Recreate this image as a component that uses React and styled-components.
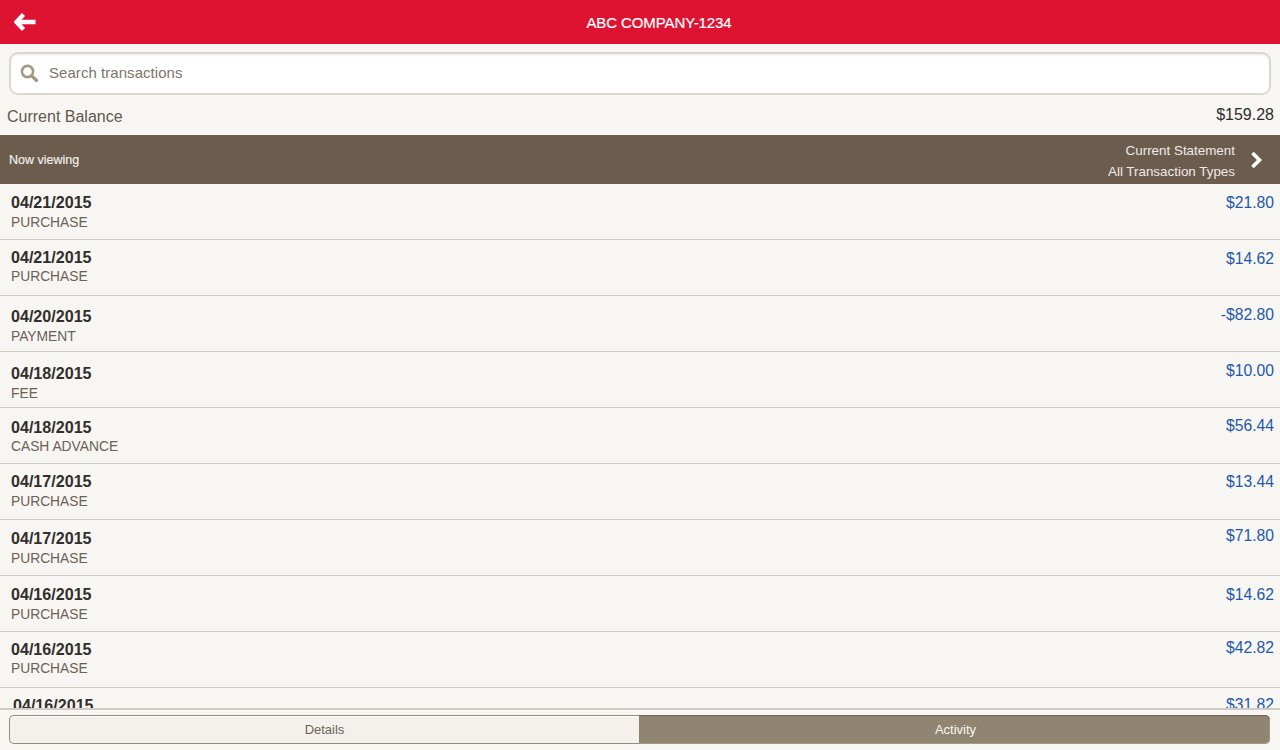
import React from "react";
import styled, { createGlobalStyle } from "styled-components";

const Global = createGlobalStyle`
  html, body { margin: 0; padding: 0; background: #f8f6f2; }
  * { box-sizing: border-box; }
  body { font-family: "Liberation Sans", Arial, sans-serif; }
`;
const Page = styled.div`
  width: 1280px; height: 750px; display: flex; flex-direction: column;
  overflow: hidden; background: #f8f6f2;
`;
const Header = styled.header`
  height: 44px; flex: none; background: #de1331; color: #fff;
  display: grid; grid-template-columns: 1fr auto 1fr; align-items: center;
  padding: 0 14px;
`;
const BackButton = styled.div`display: flex; align-items: center;`;
const Title = styled.h1`
  margin: 0 0 0 38px; font-size: 15px; font-weight: 400; letter-spacing: -0.1px;
  -webkit-text-stroke: 0.2px #fff;
`;
const SearchWrap = styled.div`padding: 8px 9px 0 9px; flex: none;`;
const SearchBox = styled.div`
  height: 43px; border: 2px solid #dcd8cf; border-radius: 9px; background: #fff;
  box-shadow: inset 0 3px 3px -2px #eeeae4;
  display: flex; align-items: center; padding-left: 9px; gap: 11px;
  color: #7d7568; font-size: 15px; line-height: 18px;
`;
const SearchText = styled.span`letter-spacing: 0.05px; margin-bottom: 2px;`;
const SearchIcon = styled.svg`margin-bottom: 2px; flex: none;`;
const BalanceRow = styled.div`
  height: 40px; flex: none; display: flex; justify-content: space-between;
  padding: 2px 6px 0 7px; align-items: center;
`;
const BalanceLabel = styled.span`font-size: 16px; color: #5f5850; margin-top: 2px;`;
const BalanceValue = styled.span`font-size: 16px; color: #2c2c2c; margin-bottom: 2px;`;
const ViewingBar = styled.div`
  height: 49px; flex: none; background: #6b5c4e; color: #fff;
  display: flex; justify-content: space-between; align-items: center;
  padding: 0 18px 0 9px;
`;
const ViewingLabel = styled.span`font-size: 12.5px; color: #f6f2ec; -webkit-text-stroke: 0.15px #f6f2ec;`;
const ViewingRight = styled.div`display: flex; align-items: center; gap: 15px;`;
const ViewingLines = styled.div`
  text-align: right; font-size: 13.4px; line-height: 21px; color: #efebe5; padding-top: 3px;
`;
const List = styled.div`flex: 1; min-height: 0; overflow: hidden;`;
const Row = styled.div`
  height: 56px; border-bottom: 1px solid #cfccc5;
  display: flex; justify-content: space-between; padding: 0 6px 0 11px;
`;
const Left = styled.div`padding-top: ${p => p.$date - 10}px; ${p => p.$shift ? "margin-left:2px;" : ""}`;
const DateText = styled.div`font-size: 16.1px; line-height: 20px; font-weight: 700; color: #312e2b;`;
const Kind = styled.div`
  font-size: 13.8px; line-height: 20px; color: #6a6158; margin-top: ${p => p.$gap + 1}px;
`;
const Amount = styled.div`
  font-size: 15.7px; line-height: 20px; color: #2458a8; padding-top: ${p => p.$top - 9}px;
`;
const Footer = styled.div`
  height: 42px; flex: none; border-top: 2px solid #d2cbc4; padding: 5px 10px 5px 9px;
  background: #f8f6f2; display: flex; align-items: flex-start;
`;
const Segment = styled.div`
  height: 29px; display: flex; align-items: center; justify-content: center;
  font-size: 13px; width: ${p => p.$w}px;
  ${p => p.$active
    ? `background:#8f8570;color:#f8f6f1;border-radius:0 5px 5px 0;box-shadow:inset 0 1px 1px #6e6452,inset -1px -1px 0 #a49b88;padding-left:2px;`
    : `background:#f4f1ec;color:#6b635a;border:1px solid #948b7a;border-right:none;border-radius:5px 0 0 5px;box-shadow:inset 0 1px 0 #fff;`}
`;

const rows = [
  ["04/21/2015", "PURCHASE", "$21.80", 18, 0, 18],
  ["04/21/2015", "PURCHASE", "$14.62", 17, -1, 18],
  ["04/20/2015", "PAYMENT", "-$82.80", 20, 0, 18],
  ["04/18/2015", "FEE", "$10.00", 21, 0, 18],
  ["04/18/2015", "CASH ADVANCE", "$56.44", 19, -1, 17],
  ["04/17/2015", "PURCHASE", "$13.44", 17, 0, 17],
  ["04/17/2015", "PURCHASE", "$71.80", 18, 0, 15],
  ["04/16/2015", "PURCHASE", "$14.62", 18, 0, 18],
  ["04/16/2015", "PURCHASE", "$42.82", 17, -1, 15],
  ["04/16/2015", "", "$31.82", 17, 0, 16],
];

export default function App() {
  return (
    <Page>
      <Global />
      <Header>
        <BackButton>
          <svg width="23" height="18" viewBox="0 0 23 18">
            <path d="M9.5 1.5 L2.5 9 L9.5 16.5 M3.5 9 H21.5" fill="none" stroke="#fff" strokeWidth="4.4" strokeLinejoin="miter" />
          </svg>
        </BackButton>
        <Title>ABC COMPANY-1234</Title>
        <span />
      </Header>
      <SearchWrap>
        <SearchBox>
          <SearchIcon width="18" height="18" viewBox="0 0 18 18">
            <circle cx="7.5" cy="7.5" r="5.6" fill="none" stroke="#a39a84" strokeWidth="2.6" />
            <path d="M11.8 11.8 L16.5 16.5" stroke="#a39a84" strokeWidth="3.2" strokeLinecap="round" />
          </SearchIcon>
          <SearchText>Search transactions</SearchText>
        </SearchBox>
      </SearchWrap>
      <BalanceRow>
        <BalanceLabel>Current Balance</BalanceLabel>
        <BalanceValue>$159.28</BalanceValue>
      </BalanceRow>
      <ViewingBar>
        <ViewingLabel>Now viewing</ViewingLabel>
        <ViewingRight>
          <ViewingLines>
            <div>Current Statement</div>
            <div>All Transaction Types</div>
          </ViewingLines>
          <svg width="12" height="18" viewBox="0 0 12 18">
            <path d="M2.5 2 L9.5 9 L2.5 16" fill="none" stroke="#fff" strokeWidth="3.6" />
          </svg>
        </ViewingRight>
      </ViewingBar>
      <List>
        {rows.map((r, i) => (
          <Row key={i}>
            <Left $date={r[3]} $shift={i === 9}>
              <DateText>{r[0]}</DateText>
              {r[1] && <Kind $gap={r[4]}>{r[1]}</Kind>}
            </Left>
            <Amount $top={r[5]}>{r[2]}</Amount>
          </Row>
        ))}
      </List>
      <Footer>
        <Segment $w={630}>Details</Segment>
        <Segment $w={631} $active>Activity</Segment>
      </Footer>
    </Page>
  );
}
